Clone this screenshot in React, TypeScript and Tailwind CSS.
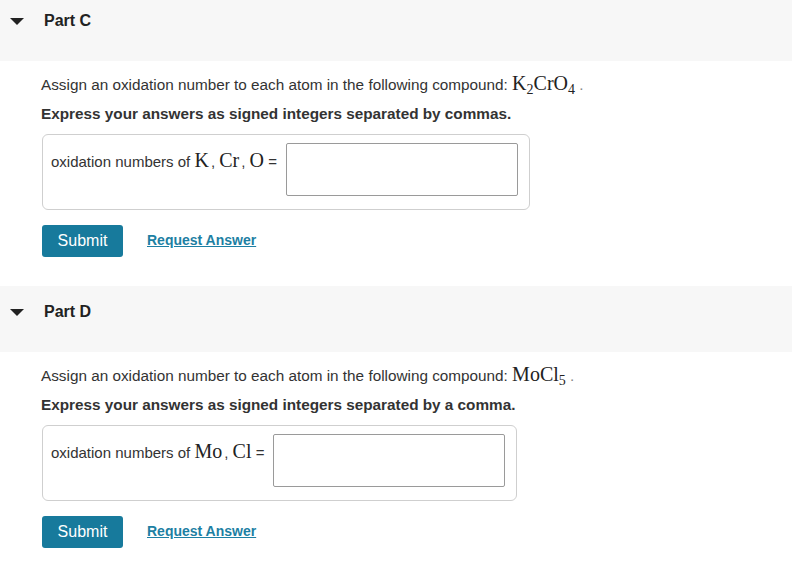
import React from "react";

const sans = { fontFamily: '"Liberation Sans", Arial, sans-serif' };

const Math = ({ children }: { children: React.ReactNode }) => (
  <span
    className="text-[20px] leading-none text-[#222]"
    style={{ fontFamily: '"Liberation Serif", "Times New Roman", serif' }}
  >
    {children}
  </span>
);

interface PartProps {
  title: string;
  compound: React.ReactNode;
  instruction: string;
  vars: React.ReactNode;
  first?: boolean;
}

const Part = ({ title, compound, instruction, vars, first }: PartProps) => (
  <section>
    {/* Header */}
    <div className={`flex items-start bg-[#f7f7f7] h-[66px] pt-[17px] ${first ? "-mt-[5px]" : ""}`}>
      <svg width="14" height="8" viewBox="0 0 14 8" className="ml-[10px] mt-[6px]">
        <path d="M0 0 L14 0 L7 7 Z" fill="#222" />
      </svg>
      <h2 className="ml-[20px] text-[16px] leading-[18px] font-bold text-[#222]">{title}</h2>
    </div>

    {/* Body */}
    <div className="pl-[41px] pt-[12px] pb-[29px]">
      <p className="h-[22px] text-[15.3px] text-[#333] leading-[22px]">
        Assign an oxidation number to each atom in the following compound: {compound}
        <span className="text-[#888]"> .</span>
      </p>
      <p className="mt-[8px] text-[15.3px] font-bold text-[#333] leading-[22px]">{instruction}</p>

      <div className="mt-[9px] ml-px inline-flex items-start border border-[#cfcfcf] rounded-[6px] pl-[8px] pr-[11px] pt-[8px] pb-[13px]">
        <span className="pt-[7px] text-[15px] leading-[20px] text-[#333] whitespace-nowrap">
          oxidation numbers of {vars} =
        </span>
        <div className="ml-[9px] w-[232px] h-[53px] border border-[#9a9a9a] rounded-[2px] bg-white" />
      </div>

      <div className="mt-[15px] ml-px flex items-center">
        <button className="w-[81px] h-[32px] bg-[#177a9c] text-white text-[16px] rounded-[3px]">
          Submit
        </button>
        <a className="ml-[24px] pb-[2px] text-[14px] font-bold text-[#1d7fa3] underline underline-offset-1 cursor-pointer">
          Request Answer
        </a>
      </div>
    </div>
  </section>
);

export default function App() {
  return (
    <div className="w-[792px] h-[578px] overflow-hidden bg-white" style={sans}>
      <Part
        first
        title="Part C"
        compound={
          <Math>
            K<sub className="text-[14px] leading-none">2</sub>CrO<sub className="text-[14px] leading-none">4</sub>
          </Math>
        }
        instruction="Express your answers as signed integers separated by commas."
        vars={
          <>
            <Math>K</Math><span className="ml-[2px]">,</span> <Math>Cr</Math>
            <span className="ml-[2px]">,</span> <Math>O</Math>
          </>
        }
      />
      <Part
        title="Part D"
        compound={
          <Math>
            MoCl<sub className="text-[14px] leading-none">5</sub>
          </Math>
        }
        instruction="Express your answers as signed integers separated by a comma."
        vars={
          <>
            <Math>Mo</Math><span className="ml-[2px]">,</span> <Math>Cl</Math>
          </>
        }
      />
    </div>
  );
}
